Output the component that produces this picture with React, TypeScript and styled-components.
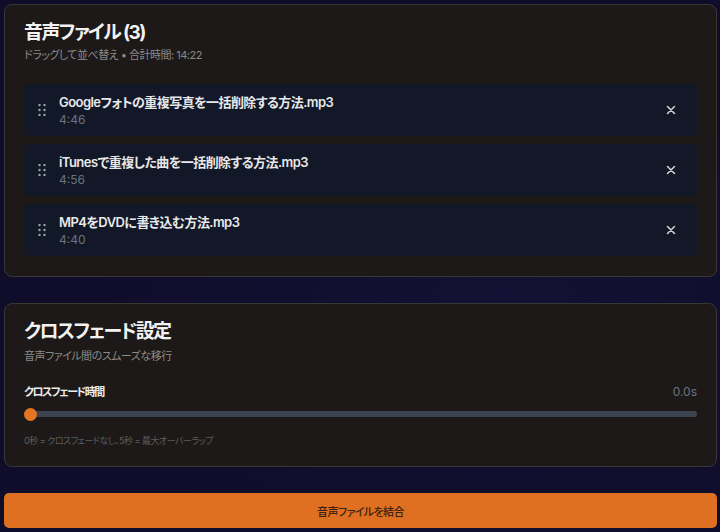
import React from "react";
import styled, { createGlobalStyle } from "styled-components";

const GlobalStyle = createGlobalStyle`
  * { box-sizing: border-box; }
  html, body {
    margin: 0;
    padding: 0;
    background: #0f0d29;
  }
  body {
    font-family: "Inter", "Noto Sans CJK JP", sans-serif;
    font-feature-settings: "palt";
    -webkit-font-smoothing: antialiased;
  }
`;

const Page = styled.div`
  min-height: 532px;
  padding: 4px 3px 4px 4px;
  display: flex;
  flex-direction: column;
  gap: 26px;
  background: radial-gradient(ellipse at 70% 60%, #131135 0%, #0f0d29 60%);
`;

const Card = styled.section<{ $padBottom?: number }>`
  background: #1c1918;
  border: 1px solid #3a3634;
  border-radius: 8px;
  padding: 16px 19px ${(p) => p.$padBottom ?? 20}px 19px;
  display: flex;
  flex-direction: column;
`;

const Title = styled.h2`
  margin: 0;
  font-size: 19px;
  line-height: 24px;
  font-weight: 700;
  letter-spacing: -1.6px;
  color: #f2f2f2;
`;

const Subtitle = styled.p<{ $mt?: number }>`
  margin: ${(p) => p.$mt ?? 2}px 0 0 0;
  font-size: 11px;
  line-height: 16px;
  letter-spacing: -0.5px;
  color: #8c8a88;
`;

const List = styled.div`
  margin-top: 21px;
  display: flex;
  flex-direction: column;
  gap: 8px;
`;

const Row = styled.div`
  height: 52px;
  background: #121828;
  border-radius: 6px;
  display: flex;
  align-items: center;
  padding: 0 14px 0 14px;
`;

const Grip = styled.span`
  width: 21px;
  display: flex;
  align-items: center;
  color: #9ca3af;
`;

const Info = styled.div`
  flex: 1;
  display: flex;
  flex-direction: column;
  gap: 1px;
  min-width: 0;
`;

const FileName = styled.div`
  font-size: 13px;
  line-height: 18px;
  font-weight: 600;
  letter-spacing: -0.55px;
  color: #e8e8e8;
`;

const Duration = styled.div`
  font-size: 12px;
  line-height: 15px;
  color: #6b7280;
`;

const RemoveButton = styled.button`
  width: 24px;
  height: 24px;
  border: none;
  background: transparent;
  display: flex;
  align-items: center;
  justify-content: center;
  color: #d4d4d4;
  padding: 0;
  cursor: pointer;
`;

const LabelRow = styled.div`
  margin-top: 20px;
  display: flex;
  justify-content: space-between;
  align-items: center;
  line-height: 16px;
`;

const Label = styled.span`
  font-size: 11px;
  font-weight: 700;
  letter-spacing: -1.5px;
  color: #ededed;
`;

const Value = styled.span`
  font-size: 12px;
  color: #6b7280;
`;

const SliderBox = styled.div`
  margin-top: 8px;
  height: 12px;
  position: relative;
  display: flex;
  align-items: center;
`;

const Track = styled.div`
  width: 100%;
  height: 6px;
  border-radius: 3px;
  background: #3d4451;
`;

const Thumb = styled.div`
  position: absolute;
  left: 0;
  top: 0;
  width: 13px;
  height: 13px;
  border-radius: 50%;
  background: #e5761f;
`;

const Help = styled.p`
  margin: 14px 0 0 0;
  font-size: 9px;
  line-height: 14px;
  letter-spacing: -0.5px;
  color: #5f5d5b;
`;

const MergeButton = styled.button`
  height: 35px;
  border: none;
  border-radius: 5px;
  background: #e07021;
  color: #3b2211;
  font-family: "Inter", "Noto Sans CJK JP", sans-serif;
  font-feature-settings: "palt";
  font-size: 11px;
  font-weight: 500;
  letter-spacing: -0.6px;
  cursor: pointer;
`;

const GripIcon = () => (
  <svg width="8" height="12" viewBox="0 0 8 12" fill="currentColor">
    {[1, 6].map((x) =>
      [1, 6, 11].map((y) => <circle key={`${x}-${y}`} cx={x + 0.5} cy={y} r="1.2" />)
    )}
  </svg>
);

const XIcon = () => (
  <svg width="10" height="10" viewBox="0 0 10 10" fill="none" stroke="currentColor" strokeWidth="1.5" strokeLinecap="round">
    <path d="M1.5 1.5 L8.5 8.5 M8.5 1.5 L1.5 8.5" />
  </svg>
);

const files = [
  { name: "Googleフォトの重複写真を一括削除する方法.mp3", dur: "4:46" },
  { name: "iTunesで重複した曲を一括削除する方法.mp3", dur: "4:56" },
  { name: "MP4をDVDに書き込む方法.mp3", dur: "4:40" },
];

export default function App() {
  return (
    <>
      <GlobalStyle />
      <Page>
        <Card>
          <Title>音声ファイル (3)</Title>
          <Subtitle>ドラッグして並べ替え • 合計時間: 14:22</Subtitle>
          <List>
            {files.map((f) => (
              <Row key={f.name}>
                <Grip>
                  <GripIcon />
                </Grip>
                <Info>
                  <FileName>{f.name}</FileName>
                  <Duration>{f.dur}</Duration>
                </Info>
                <RemoveButton aria-label="削除">
                  <XIcon />
                </RemoveButton>
              </Row>
            ))}
          </List>
        </Card>
        <Card $padBottom={18}>
          <Title>クロスフェード設定</Title>
          <Subtitle $mt={4}>音声ファイル間のスムーズな移行</Subtitle>
          <LabelRow>
            <Label>クロスフェード時間</Label>
            <Value>0.0s</Value>
          </LabelRow>
          <SliderBox>
            <Track />
            <Thumb />
          </SliderBox>
          <Help>0秒 = クロスフェードなし、5秒 = 最大オーバーラップ</Help>
        </Card>
        <MergeButton>音声ファイルを結合</MergeButton>
      </Page>
    </>
  );
}
